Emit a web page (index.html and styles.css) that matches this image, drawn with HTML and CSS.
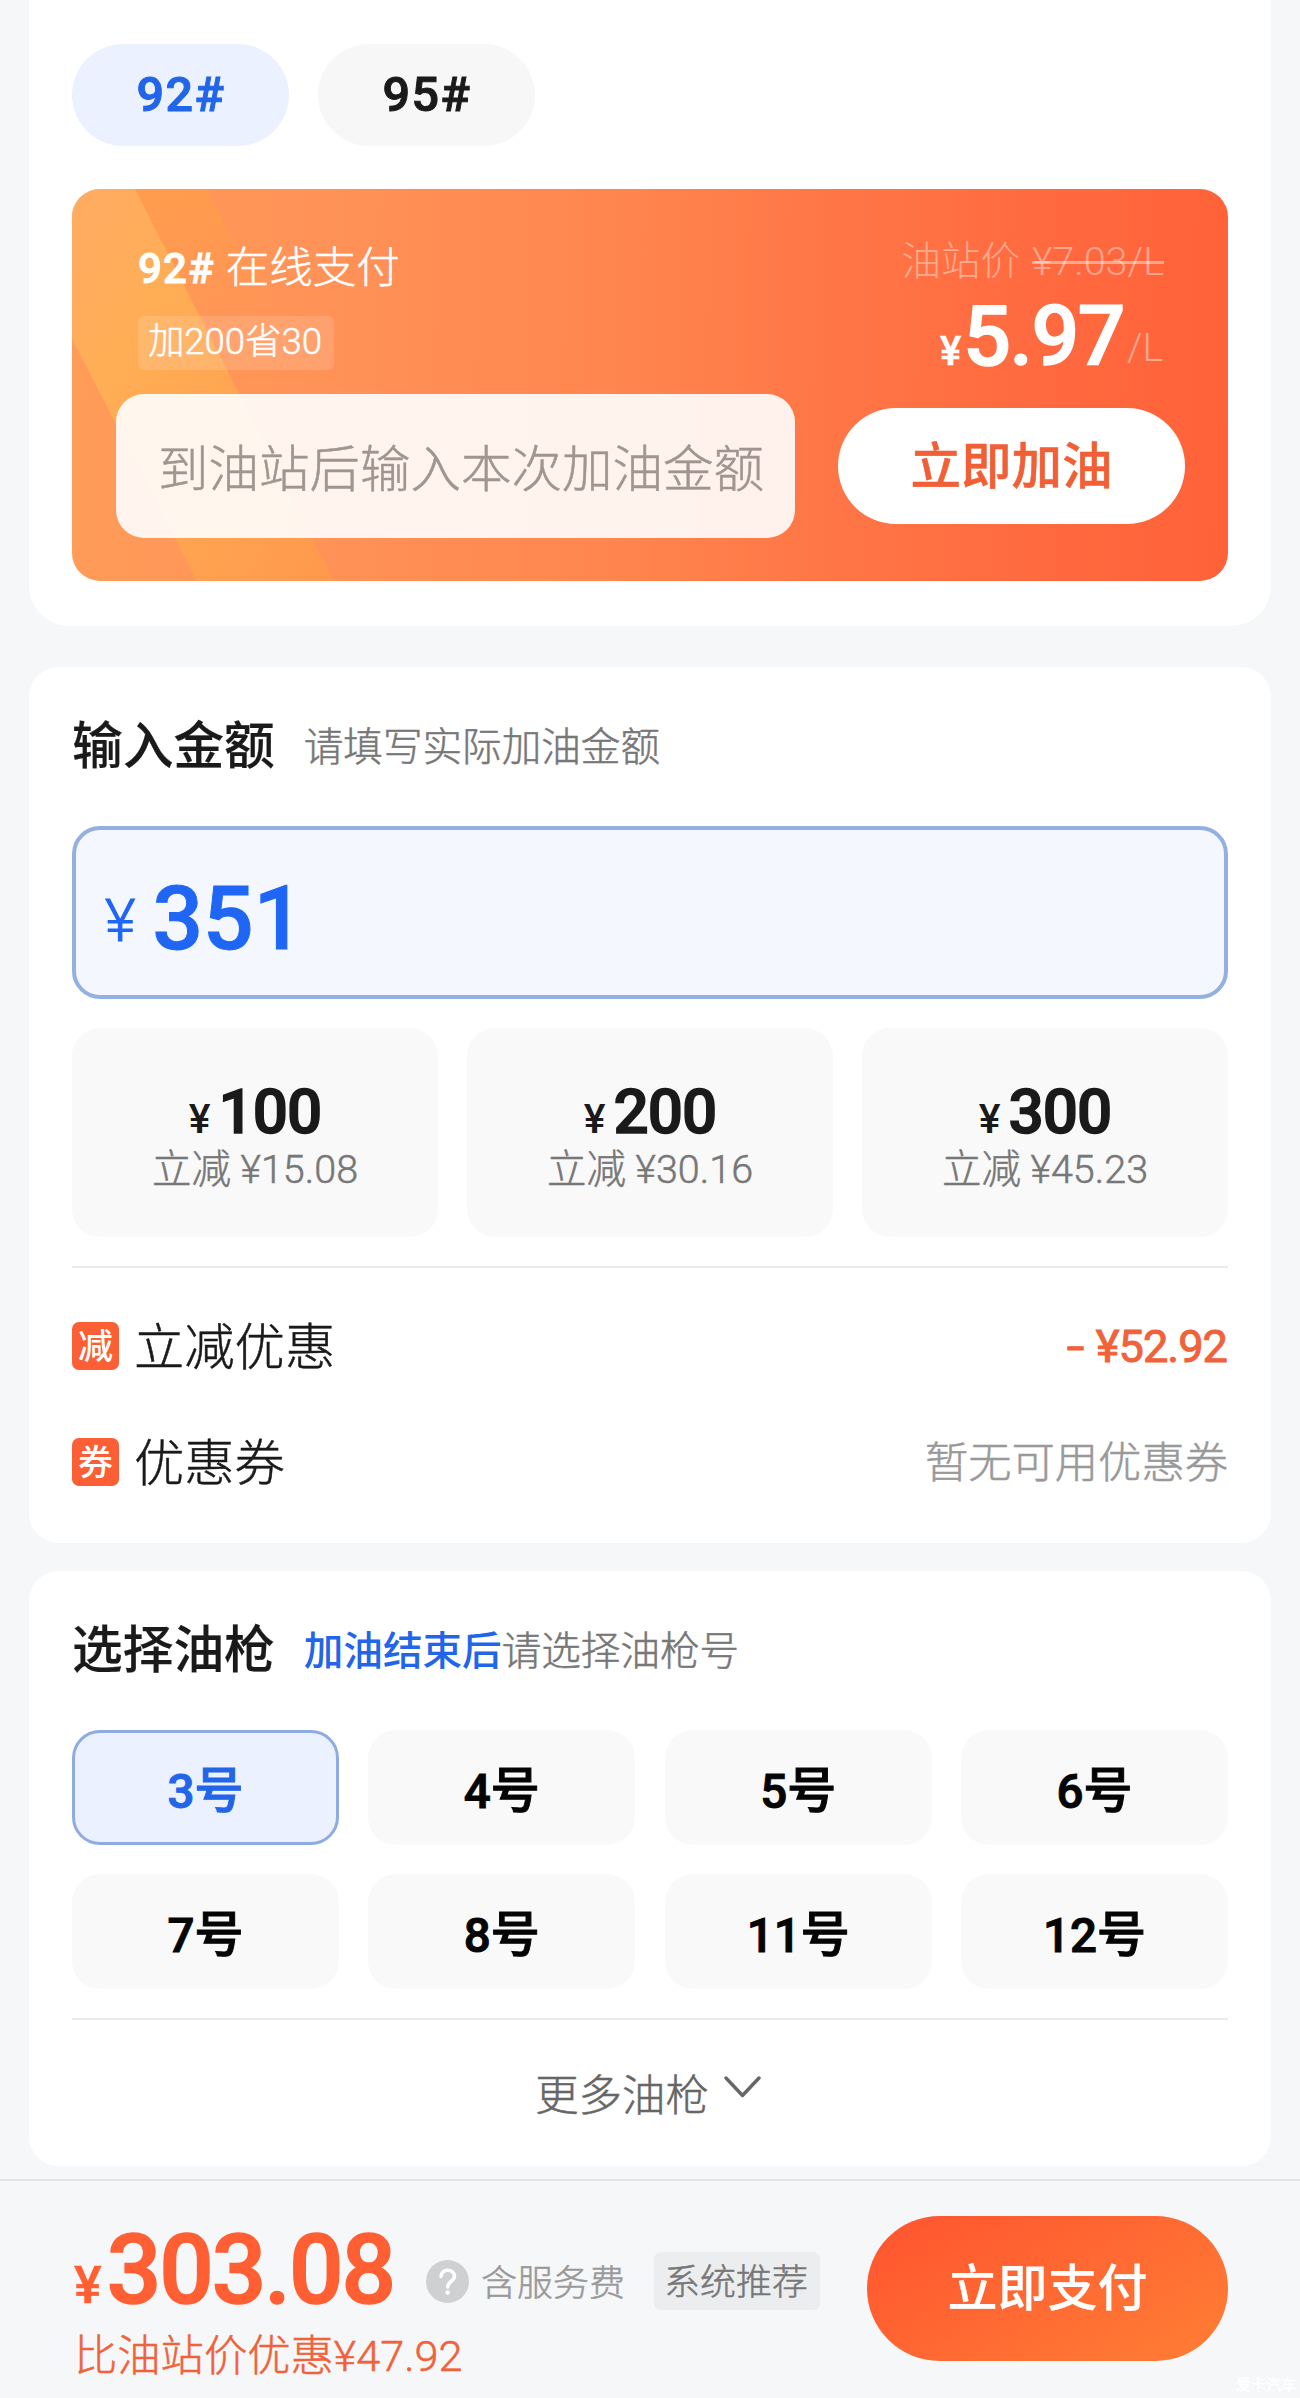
FILE: index.html
```html
<!DOCTYPE html>
<html lang="zh-CN">
<head>
<meta charset="utf-8">
<title>加油支付</title>
<link rel="stylesheet" href="styles.css">
</head>
<body>
<main class="page">
  <section class="card card-fuel">
    <div class="pills">
      <div class="pill pill-active">92#</div>
      <div class="pill">95#</div>
    </div>
    <div class="promo">
      <svg class="promo-rays" viewBox="0 0 1156 392" aria-hidden="true">
        <defs>
          <linearGradient id="ray" x1="0" y1="0" x2="0" y2="1">
            <stop offset="0" stop-color="#ffa040" stop-opacity=".5"/>
            <stop offset="1" stop-color="#ffa040" stop-opacity="0"/>
          </linearGradient>
          <linearGradient id="beam" x1="0" y1="0" x2="1" y2="1">
            <stop offset="0" stop-color="#ffb86a" stop-opacity=".55"/>
            <stop offset=".3" stop-color="#ffb754" stop-opacity=".7"/>
            <stop offset="1" stop-color="#ff9f45" stop-opacity=".55"/>
          </linearGradient>
        </defs>
        <path d="M0 0H63L262 392H125L0 150Z" fill="url(#beam)"/>
        <path d="M63 0H135L200 130H129Z" fill="url(#ray)"/>
      </svg>
      <div class="promo-top">
        <div class="promo-info">
          <div class="promo-name"><b>92#</b><span>在线支付</span></div>
          <div class="promo-tag">加200省30</div>
        </div>
        <div class="promo-price">
          <div class="station-price"><span>油站价</span><s>¥7.03/L</s></div>
          <div class="unit-price"><span class="yen">¥</span><span class="num">5.97</span><span class="unit">/L</span></div>
        </div>
      </div>
      <div class="promo-form">
        <div class="promo-input">到油站后输入本次加油金额</div>
        <div class="promo-button">立即加油</div>
      </div>
    </div>
  </section>

  <section class="card card-amount">
    <header class="head"><h2>输入金额</h2><p>请填写实际加油金额</p></header>
    <div class="amount"><span class="amount-yen">¥</span><span class="amount-num">351</span></div>
    <div class="quick">
      <div class="quick-item"><div class="quick-sum"><small>¥</small>100</div><div class="quick-off">立减 ¥15.08</div></div>
      <div class="quick-item"><div class="quick-sum"><small>¥</small>200</div><div class="quick-off">立减 ¥30.16</div></div>
      <div class="quick-item"><div class="quick-sum"><small>¥</small>300</div><div class="quick-off">立减 ¥45.23</div></div>
    </div>
    <div class="rows">
      <div class="row"><span class="mark">减</span><span class="row-name">立减优惠</span><span class="row-off"><i>-</i>¥52.92</span></div>
      <div class="row"><span class="mark">券</span><span class="row-name">优惠券</span><span class="row-none">暂无可用优惠券</span></div>
    </div>
  </section>

  <section class="card card-gun">
    <header class="head"><h2>选择油枪</h2><p><b>加油结束后</b>请选择油枪号</p></header>
    <div class="guns">
      <div class="gun gun-active">3<span>号</span></div>
      <div class="gun">4<span>号</span></div>
      <div class="gun">5<span>号</span></div>
      <div class="gun">6<span>号</span></div>
      <div class="gun">7<span>号</span></div>
      <div class="gun">8<span>号</span></div>
      <div class="gun">11<span>号</span></div>
      <div class="gun">12<span>号</span></div>
    </div>
    <div class="more">
      <span>更多油枪</span>
      <svg width="37" height="22" viewBox="0 0 37 22" aria-hidden="true"><path d="M2 2L18.5 19.5L35 2" fill="none" stroke="#666" stroke-width="3.4" stroke-linecap="round" stroke-linejoin="round"/></svg>
    </div>
  </section>

  <footer class="bar">
    <div class="total">
      <div class="total-row">
        <div class="total-price"><small>¥</small>303.08</div>
        <svg class="help" width="43" height="43" viewBox="0 0 43 43" aria-hidden="true"><circle cx="21.5" cy="21.5" r="21.5" fill="#cfd0d2"/><path d="M15 16.5C15 8 28.5 8.500 28.500 16.500C28.500 21 21.700 21.500 21.700 27" fill="none" stroke="#fff" stroke-width="3.600" stroke-linecap="round"/><circle cx="21.700" cy="32.500" r="2.300" fill="#fff"/></svg>
        <span class="fee">含服务费</span>
        <span class="pick">系统推荐</span>
      </div>
      <div class="saved">比油站价优惠¥47.92</div>
    </div>
    <div class="pay">立即支付</div>
    <span class="watermark">爱卡汽车</span>
  </footer>
</main>
</body>
</html>
```
FILE: styles.css
```css
* { box-sizing: border-box; margin: 0; padding: 0; }

body {
  background: #f5f7f9;
  color: #1a1a1a;
  font-family: Roboto, "Noto Sans CJK SC", sans-serif;
  line-height: 1;
  -webkit-text-stroke: .5px;
}

.page { width: 1300px; height: 2398px; overflow: hidden; white-space: nowrap; }

.card { margin: 0 29px; padding: 0 43px; background: #fff; border-radius: 30px; }

/* Fuel grade and promo */
.card-fuel { height: 626px; padding-top: 44px; border-radius: 0 0 40px 40px; }
.pills { display: flex; gap: 29px; }
.pill {
  display: flex; align-items: center; justify-content: center;
  width: 217px; height: 102px; padding: 1px 0 0 1px; border-radius: 51px;
  background: #f7f7f7; font-size: 48.500px; font-weight: 500; letter-spacing: 1.500px;
  -webkit-text-stroke: 1px;
}
.pill-active { background: #ebf1fe; color: #2265e8; }

.promo {
  position: relative; height: 392px; margin-top: 43px; overflow: hidden;
  border-radius: 28px; color: #fff;
  background: linear-gradient(91deg, #ff9c59 0%, #ff9257 22%, #ff874f 45%, #ff7646 66%, #ff693f 85%, #ff6239 100%);
}
.promo-rays { position: absolute; inset: 0; width: 1156px; height: 392px; }
.promo-top { position: relative; display: flex; justify-content: space-between; height: 205px; padding: 0 64px 0 66px; }
.promo-info { padding-top: 58px; }
.promo-name { display: flex; align-items: baseline; gap: 11px; font-size: 43.500px; font-weight: 300; }
.promo-name b { font-size: 42px; font-weight: 500; letter-spacing: 1.200px; -webkit-text-stroke: 1px; }
.promo-tag {
  display: flex; align-items: center; justify-content: center;
  width: 196px; height: 54px; margin-top: 25px; padding-right: 2px; border-radius: 6px;
  background: rgba(255, 255, 255, .14); font-size: 36.500px; font-weight: 300;
}
.promo-price { display: flex; flex-direction: column; align-items: flex-end; padding-top: 53px; }
.station-price { display: flex; gap: 12px; color: rgba(255, 255, 255, .42); font-size: 39.500px; font-weight: 300; -webkit-text-stroke: 0; }
.station-price s { text-decoration-thickness: 3px; }
.unit-price { display: flex; align-items: baseline; margin-top: 13px; font-weight: 500; }
.unit-price .yen { font-size: 40px; }
.unit-price .num { margin-left: 2px; font-size: 84px; letter-spacing: -1.500px; -webkit-text-stroke: 1.500px; }
.unit-price .unit { position: relative; top: -4px; margin: 0 1px 0 3px; color: rgba(255, 255, 255, .45); font-size: 39px; font-weight: 300; -webkit-text-stroke: 0; }
.promo-form { position: relative; display: flex; align-items: center; gap: 43px; padding-left: 44px; }
.promo-input {
  width: 679px; height: 144px; padding: 51px 0 0 42px; border-radius: 28px;
  background: rgba(255, 255, 255, .9); color: #a0958f; font-size: 50.500px; font-weight: 300;
}
.promo-button {
  width: 347px; height: 116px; padding-top: 34px; border-radius: 58px;
  background: #fff; color: #f05f36; font-size: 50.500px; font-weight: 500; text-align: center;
}

/* Section headings */
.head { display: flex; align-items: flex-start; gap: 29px; height: 159px; padding-top: 55px; }
.head h2 { font-size: 50.700px; font-weight: 500; -webkit-text-stroke: .2px; }
.head p { margin-top: 6px; color: #777; font-size: 39.600px; font-weight: 300; }
.head b { color: #2265e8; font-weight: 500; -webkit-text-stroke: 0; }

/* Amount */
.card-amount { height: 876px; margin-top: 41px; }
.amount {
  display: flex; align-items: flex-start; height: 173px; padding: 44px 0 0 29px;
  border: 4px solid #94b0e0; border-radius: 28px; background: #f4f8fe; color: #1f66f5;
}
.amount-yen { margin-top: 17px; font-size: 59px; font-weight: 300; -webkit-text-stroke: 1px; }
.amount-num { margin-left: 17px; font-size: 89px; font-weight: 500; -webkit-text-stroke: 1px; }
.quick { display: grid; grid-template-columns: repeat(3, 366px); gap: 29px; margin-top: 29px; }
.quick-item { height: 209px; padding-top: 53px; border-radius: 28px; background: #f9f9f9; text-align: center; }
.quick-sum { font-size: 62px; font-weight: 500; letter-spacing: -1px; -webkit-text-stroke: 1.500px; }
.quick-sum small { margin-right: 9px; font-size: 41px; font-weight: 500; -webkit-text-stroke: 0; }
.quick-off { margin-top: 7px; color: #777; font-size: 39.500px; font-weight: 300; }
.rows { margin-top: 29px; padding-top: 20px; border-top: 2px solid #ececec; }
.row { display: flex; align-items: center; height: 116px; }
.mark {
  width: 47px; height: 48px; padding-top: 8px; border-radius: 7px;
  background: #fb5f35; color: #fff; font-size: 35px; font-weight: 500; text-align: center;
  -webkit-text-stroke: 0;
}
.row-name { flex: 1; padding: 4px 0 0 15px; font-size: 50.300px; font-weight: 300; }
.row-off { margin: 2px 1px 0 0; color: #f0623a; font-size: 45.200px; font-weight: 400; letter-spacing: -1px; -webkit-text-stroke: 1px; }
.row-off i { display: inline-block; margin-right: 15px; font-style: normal; transform: scaleX(1.4); }
.row-none { padding-top: 3px; color: #999; font-size: 43.300px; font-weight: 300; }

/* Fuel guns */
.card-gun { height: 595px; margin-top: 28px; }
.guns { display: grid; grid-template-columns: repeat(4, 267px); justify-content: space-between; row-gap: 29px; }
.gun {
  display: flex; align-items: baseline; justify-content: center; height: 115px; padding-top: 37px;
  border-radius: 28px; background: #f9f9f9; color: #050505; font-size: 47.500px; font-weight: 500;
  -webkit-text-stroke: 1px;
}
.gun span { font-size: 49px; }
.gun-active { padding-top: 34px; border: 3px solid #8eabe4; background: #ebf1fe; color: #2265e8; }
.more {
  display: flex; justify-content: center; gap: 15px; height: 148px; margin-top: 29px; padding: 55px 4px 0 0;
  border-top: 2px solid #ececec; color: #666; font-size: 43.400px; font-weight: 300;
}
.more svg { margin-top: 1px; }

/* Payment bar */
.bar {
  position: relative; display: flex; justify-content: space-between; height: 219px; margin-top: 13px;
  padding: 35px 72px 0 74px; border-top: 2px solid #e4e5e7;
}
.total { padding-top: 6px; }
.total-row { display: flex; align-items: center; height: 96px; }
.total-price { width: 352px; color: #ff5f33; font-size: 96px; font-weight: 500; letter-spacing: -2px; -webkit-text-stroke: 1.500px; }
.total-price small { margin-right: 7px; font-size: 52px; font-weight: 500; -webkit-text-stroke: .5px; }
.help { margin-top: 23px; }
.fee { margin: 28px 0 0 12px; color: #999; font-size: 36px; font-weight: 300; }
.pick {
  width: 166px; height: 58px; margin: 22px 0 0 29px; padding: 13px 2px 0 0; border-radius: 7px;
  background: #ebedee; color: #777; font-size: 36px; font-weight: 300; text-align: center;
}
.saved { margin-top: 17px; color: #f0623a; font-size: 43.300px; font-weight: 300; }
.pay {
  width: 361px; height: 145px; padding-top: 48px; border-radius: 73px;
  background: linear-gradient(150deg, #ff5830 10%, #ff7a34 90%); color: #fff;
  font-size: 50px; font-weight: 500; text-align: center; -webkit-text-stroke: .2px;
}
.watermark { position: absolute; right: 4px; bottom: 5px; color: #fff; font-size: 15px; }
```
